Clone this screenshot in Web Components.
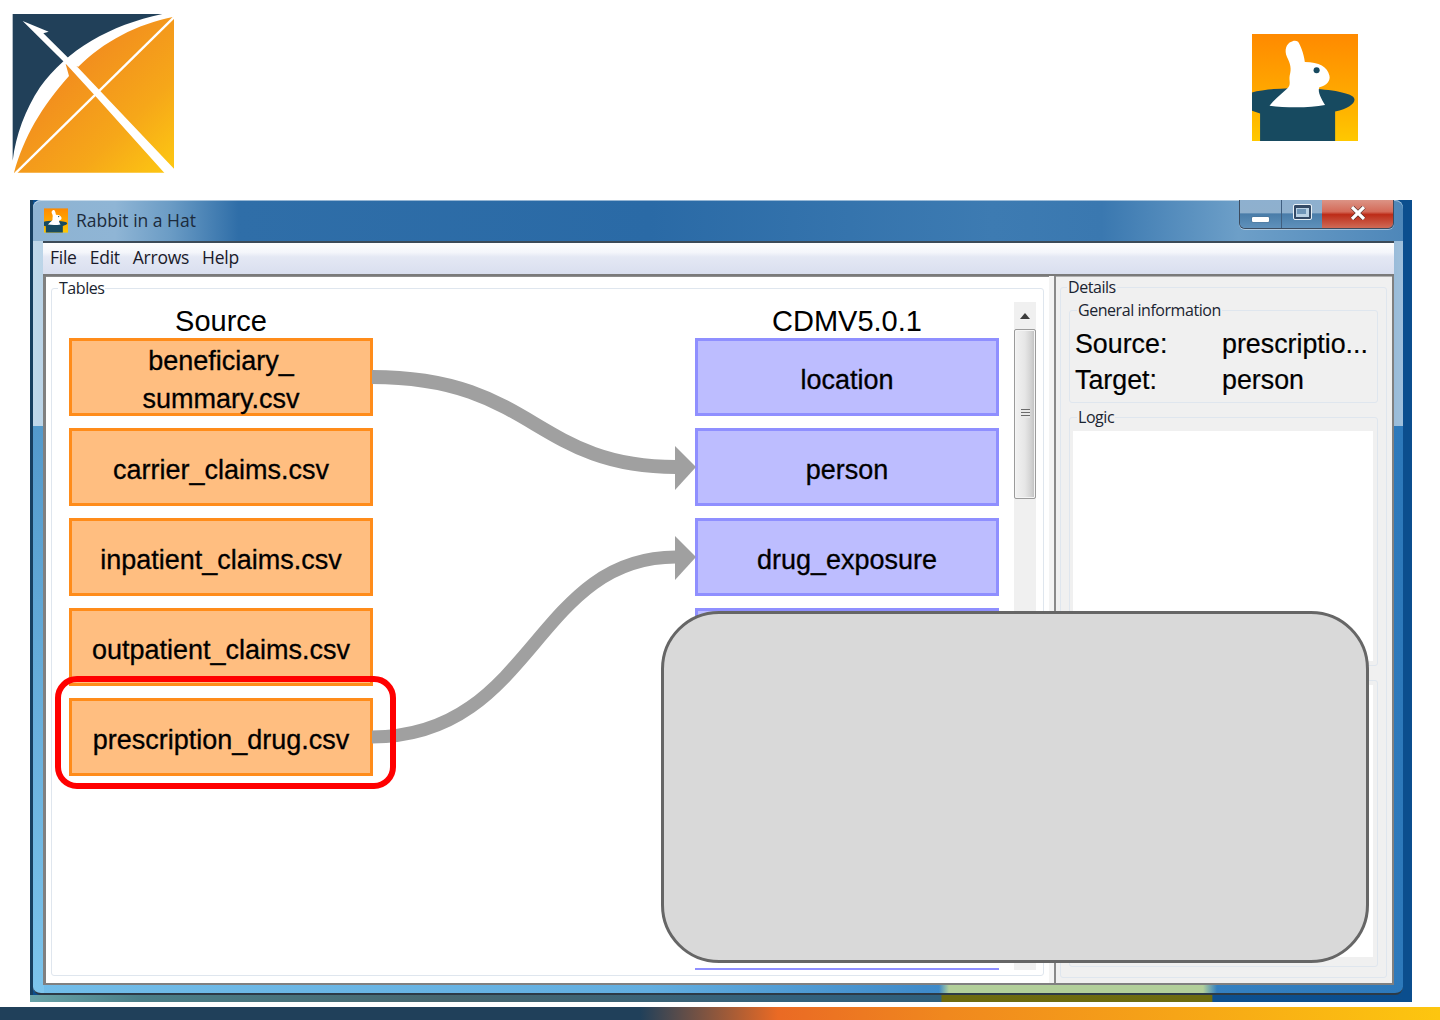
<!DOCTYPE html>
<html lang="en"><head><meta charset="utf-8"><title>Rabbit in a Hat</title>
<style>
html,body{margin:0;padding:0;background:#fff}
body{width:1440px;height:1020px;overflow:hidden;font-family:"Liberation Sans",Arial,sans-serif;color:#000}
</style></head><body>
<slide-page>
  <slide-header></slide-header>
  <app-window title-text="Rabbit in a Hat">
    <menu-bar><span>File</span><span>Edit</span><span>Arrows</span><span>Help</span></menu-bar>
    <tables-pane slot="left"></tables-pane>
    <details-pane slot="right"></details-pane>
  </app-window>
  <slide-footer></slide-footer>
  <red-highlight></red-highlight>
  <grey-callout></grey-callout>
</slide-page>
<script>
const UI='"Open Sans","Noto Sans",sans-serif';
function def(name,css,html,init){
  customElements.define(name,class extends HTMLElement{
    constructor(){super();const r=this.attachShadow({mode:'open'});
      r.innerHTML='<style>'+css+'</style>'+(typeof html==='function'?html(this):html);}
    connectedCallback(){ if(init) init(this); }
  });
}
def('slide-page',':host{display:block;position:relative;width:1440px;height:1020px}','<slot></slot>');

def('ohdsi-logo',':host{display:block;width:200px;height:190px}svg{display:block;filter:blur(.35px)}',`
<svg width="200" height="190" viewBox="0 0 600 570" aria-label="OHDSI logo">
<defs><linearGradient id="o" gradientUnits="userSpaceOnUse" x1="210" y1="210" x2="510" y2="520"><stop offset="0" stop-color="#f28e1e"/><stop offset=".55" stop-color="#f6a719"/><stop offset="1" stop-color="#fdc812"/></linearGradient></defs>
<path fill="#214059" d="M38 42H487C330 75 200 150 120 262C75 330 48 405 38 482Z"/>
<path fill="url(#o)" d="M42 518C72 410 125 320 207 228L197 192L235 200C310 125 410 72 522 50V518Z"/>
<path fill="#fff" d="M68 63L146 95L130 100L236 205L522 506V520H494L288 290L196 190Z"/>
<path stroke="#fff" stroke-width="7" d="M524 50L46 520"/>
</svg>`);

def('rabbit-logo',':host{display:block}svg{display:block;width:100%;height:100%}',`
<svg viewBox="68 42 315 318" aria-label="Rabbit in a Hat logo">
<defs><linearGradient id="r" x1="0" y1="0" x2="0" y2="1"><stop offset="0" stop-color="#ff8a00"/><stop offset=".55" stop-color="#ffa800"/><stop offset="1" stop-color="#ffc800"/></linearGradient></defs>
<rect x="68" y="42" width="315" height="318" fill="url(#r)"/>
<path fill="#174a60" d="M68 216C130 198 310 198 365 226C385 238 365 262 315 272V360H92V278L68 270Z"/>
<path fill="#fff" d="M185 65C170 70 163 90 172 110C182 130 186 145 180 165C177 182 186 192 172 205C150 225 132 240 120 255C170 262 240 262 285 253C275 235 262 215 268 200C290 196 302 180 298 165C292 140 268 125 225 125C222 100 212 75 205 65C198 60 190 62 185 65Z"/>
<circle cx="260" cy="150" r="9" fill="#174a60"/>
</svg>`);

def('slide-header',`:host{display:flex;justify-content:space-between;align-items:flex-start;height:200px}
rabbit-logo{width:106px;height:107px;margin:34px 82px 0 0;filter:blur(.7px)}`,'<ohdsi-logo></ohdsi-logo><rabbit-logo></rabbit-logo>');

def('caption-buttons',`:host{display:flex;height:29px;box-sizing:border-box;border:1px solid #3c4c60;border-top:0;border-radius:0 0 6px 6px;overflow:hidden;box-shadow:0 1px 0 rgba(255,255,255,.45)}
div{display:flex;align-items:center;justify-content:center;box-sizing:border-box}
.min,.max{width:42px;background:linear-gradient(180deg,#8eb0cf 0,#8fb0cd 45%,#4a7da9 50%,#5f91bb 100%);border-right:1px solid #3f5f80}
.max{width:40px;border-right:0}
.close{width:71px;background:linear-gradient(180deg,#dc9385 0,#d46a58 42%,#bd2c18 52%,#cf6a56 100%)}
i{display:block;background:#fff;border-radius:1px}
.min i{width:17px;height:5px;margin-top:11px;box-shadow:0 0 1px #333}
.max i{width:17px;height:14px;margin-top:-4px;box-sizing:border-box;background:#b9d1e4;border:2px solid #334a66;outline:1px solid #e8f0f6;border-top-width:3px}
.max i::after{content:"";display:block;width:9px;height:5px;margin:1px;background:#6f96b8}
svg{margin-top:-3px}`,
`<div class="min"><i></i></div><div class="max"><i></i></div><div class="close"><svg width="18" height="14" viewBox="0 0 18 14"><path d="M3 1L15 13M15 1L3 13" stroke="#4a2a26" stroke-width="4.4"/><path d="M3 1L15 13M15 1L3 13" stroke="#fff" stroke-width="3.2"/></svg></div>`);

def('app-window',`:host{display:block;width:1382px;height:802px;margin-left:30px;box-sizing:border-box;padding:0 9px 7px 3px;
 background:
  linear-gradient(90deg,#68a3a8 0,#4a7e88 8%,#46666f 30%,#33617c 55%,#2f5f7c 65.9%,#6c6a0f 66%,#6d6c10 85.5%,#0d4f8e 85.6%,#0b4e8e 100%) bottom/100% 7px no-repeat,
  linear-gradient(90deg,#173f60 0 3px,#0b4e8e 3px);}
.frame{height:795px;box-sizing:border-box;padding:0 9px 8px 10px;border-radius:8px;border-bottom:2px solid #2c3a46;
 box-shadow:inset 0 1px 0 rgba(255,255,255,.5);
 background:
  linear-gradient(90deg,#8eb3d2 0,#8fb5d5 6%,#6b9cc5 10%,#2f6ea8 15%,#2a6aa6 45%,#3d7bb2 70%,#3a78b0 78%,#6d9fc8 88%,#4e87b9 100%) top/100% 41px no-repeat,
  linear-gradient(90deg,#c0d8ea 0,#b4cfe4 2%,#8fb4d4 98%,#9fc0dc 100%) 0 41px/100% 185px no-repeat,
  linear-gradient(180deg,#4389bf,#7cc4ec) 0 0/11px 100% no-repeat,
  linear-gradient(90deg,transparent 906px,#b2cf9a 916px,#b2cf9a 1170px,transparent 1184px) bottom/100% 8px no-repeat,
  linear-gradient(90deg,#72bde9 0,#62aee0 45%,#3f8bca 65%,#2d79bb 100%);}
.title{display:flex;height:41px;align-items:flex-start}
rabbit-logo{width:24px;height:25px;margin:8px 8px 0 1px}
.t{font:17.5px/40px ${UI};color:#1c2b3c;margin-top:0;flex:1}
.client{height:744px;display:flex;flex-direction:column;background:#f0f0f0}
.body{display:flex;flex:1;min-height:0;border:solid #808080;border-width:0 2px 2px 3px}
.l{display:block;width:1003px}
.sash{width:5px;background:#f4f4f4}
.split{width:2px;background:#8a8a8a}
.r{display:block;flex:1}
.l ::slotted(*){height:100%}`,
(h)=>`<div class="frame"><div class="title"><rabbit-logo></rabbit-logo><div class="t">${h.getAttribute('title-text')}</div><caption-buttons></caption-buttons></div>
<div class="client"><slot></slot><div class="body"><div class="l"><slot name="left"></slot></div><div class="sash"></div><div class="split"></div><div class="r"><slot name="right"></slot></div></div></div></div>`);

def('menu-bar',`:host{display:flex;box-sizing:border-box;height:35px;gap:13px;padding:0 0 2px 7px;align-items:center;
 border-top:2px solid #3b4a58;border-bottom:2px solid #7a7a7a;
 background:linear-gradient(180deg,#fdfdfe 0,#f4f6fb 30%,#e4e8f4 45%,#d9dfef 100%);
 font:17.5px/1 ${UI};color:#1a1a2a;letter-spacing:-.25px}`,'<slot></slot>');

def('group-box',`:host{display:block;box-sizing:border-box}
fieldset{box-sizing:border-box;margin:0;padding:0;height:100%;min-width:0;border:1px solid var(--gb-line,#dfe6ee);border-radius:3px}
legend{box-sizing:border-box;height:var(--gb-legend,24px);margin-left:var(--gb-off,6px);padding:0 1px;font:16px/var(--gb-legend,24px) ${UI};color:#1a2430;letter-spacing:-.45px;white-space:nowrap}`,
(h)=>`<fieldset>${h.getAttribute('label')?`<legend>${h.getAttribute('label')}</legend>`:''}<slot></slot></fieldset>`);

def('table-box',`:host{display:flex;flex:none;box-sizing:border-box;width:304px;height:78px;align-items:center;justify-content:center;text-align:center;
 border:3px solid var(--line);background:var(--fill);font:27px/38px "Liberation Sans",Arial,sans-serif;color:#000;padding-top:5px;-webkit-text-stroke:.3px #000}`,'<div><slot></slot></div>');

def('table-column',`:host{display:block;flex:none;width:304px}
.h{height:36px;text-align:center;font:29px/38px "Liberation Sans",Arial,sans-serif}
.b{display:flex;flex-direction:column;gap:12px}`,
(h)=>`<div class="h">${h.getAttribute('heading')}</div><div class="b"><slot></slot></div>`);

def('win-scrollbar',`:host{display:flex;flex-direction:column;box-sizing:border-box;width:22px;height:668px;background:#f0f0f0}
.up{height:27px;display:flex;justify-content:center;padding-top:11px;box-sizing:border-box}
.up i{width:0;height:0;border:solid transparent;border-width:0 5px 6px;border-bottom-color:#3c3c3c}
.thumb{height:170px;box-sizing:border-box;border:1px solid #9b9b9b;border-radius:2px;background:linear-gradient(90deg,#f2f2f2,#e6e6e6 50%,#cfcfcf 85%,#bcbcbc);display:flex;align-items:center;justify-content:center;box-shadow:inset 0 0 0 1px #f5f5f5}
.thumb i{display:block;width:9px;height:9px;background:repeating-linear-gradient(180deg,#6b6b6b 0 1px,#e8e8e8 1px 3px);margin-top:-2px}`,
'<div class="up"><i></i></div><div class="thumb"><i></i></div>');

def('flow-arrows',':host{position:absolute;inset:0;display:block;pointer-events:none}svg{display:block}',`
<svg width="962" height="668" viewBox="52 302 962 668">
<g fill="none" stroke="#a0a0a0" stroke-width="14"><path d="M372 377C534 377 534 467 676 467"/><path stroke-width="13" d="M372 737C534 737 534 557 676 557"/></g>
<g fill="#a0a0a0"><path d="M675 446L696 467L675 490Z"/><path d="M675 536L696 557L675 580Z"/></g>
</svg>`);

def('tables-pane',`:host{display:block;background:#fff;box-shadow:inset 0 1px 0 #8c8c8c;padding:0 5px 0 5px;box-sizing:border-box}
group-box{height:700px;width:993px}
.row{display:flex;padding-top:2px}
.canvas{position:relative;display:flex;width:962px;height:668px;overflow:hidden;box-sizing:border-box;padding:0 15px 0 17px;gap:322px}
table-box.s{--line:#ff8c1a;--fill:#ffbe80}
table-box.t{--line:#8f8fff;--fill:#bdbdff}
win-scrollbar{margin-right:7px}`,
`<group-box label="Tables"><div class="row"><div class="canvas">
<table-column heading="Source">
 <table-box class="s">beneficiary_<br>summary.csv</table-box><table-box class="s">carrier_claims.csv</table-box><table-box class="s">inpatient_claims.csv</table-box><table-box class="s">outpatient_claims.csv</table-box><table-box class="s">prescription_drug.csv</table-box>
</table-column>
<table-column heading="CDMV5.0.1">
 <table-box class="t">location</table-box><table-box class="t">person</table-box><table-box class="t">drug_exposure</table-box><table-box class="t"></table-box><table-box class="t"></table-box><table-box class="t"></table-box><table-box class="t"></table-box><table-box class="t"></table-box>
</table-column>
<flow-arrows></flow-arrows></div><win-scrollbar></win-scrollbar></div></group-box>`);

def('details-pane',`:host{display:block;height:707px;padding:0 5px 0 4px;box-sizing:border-box;background:#f0f0f0;box-shadow:inset 0 1px 0 #b0b0b0}
.outer{height:702px;--gb-legend:22px;--gb-off:6px}
.in{display:block;width:309px;margin-left:8px;--gb-legend:24px;--gb-off:7px}
.gen{height:105px}.logic{height:261px;margin-top:2px}.third{height:287px;margin-top:14px}
.kv{display:grid;grid-template-columns:147px 1fr;padding-left:5px;font:26.8px/36px "Liberation Sans",Arial,sans-serif;color:#000;white-space:nowrap;margin-top:4px;-webkit-text-stroke:.2px #000}
.area{background:#fff;margin:2px 4px 0 3px;height:230px}
.third .area{height:272px;margin-top:4px}`,
`<group-box class="outer" label="Details">
<group-box class="in gen" label="General information"><div class="kv"><span>Source:</span><span>prescriptio...</span><span>Target:</span><span>person</span></div></group-box>
<group-box class="in logic" label="Logic"><div class="area"></div></group-box>
<group-box class="in third"><div class="area"></div></group-box>
</group-box>`);

def('slide-footer',`:host{display:block;height:13px;margin-top:5px;background:linear-gradient(90deg,#20405a 0,#20405a 640px,#ea6a24 778px,#f0881e 946px,#fdc60f 1440px)}`,'');
def('red-highlight',`:host{position:absolute;left:55px;top:676px;width:341px;height:113px;box-sizing:border-box;border:6px solid #ff0000;border-radius:22px}`,'');
def('grey-callout',`:host{position:absolute;left:661px;top:611px;width:708px;height:352px;box-sizing:border-box;border:3px solid #666;border-radius:58px;background:#d9d9d9}`,'');
</script>
</body></html>
